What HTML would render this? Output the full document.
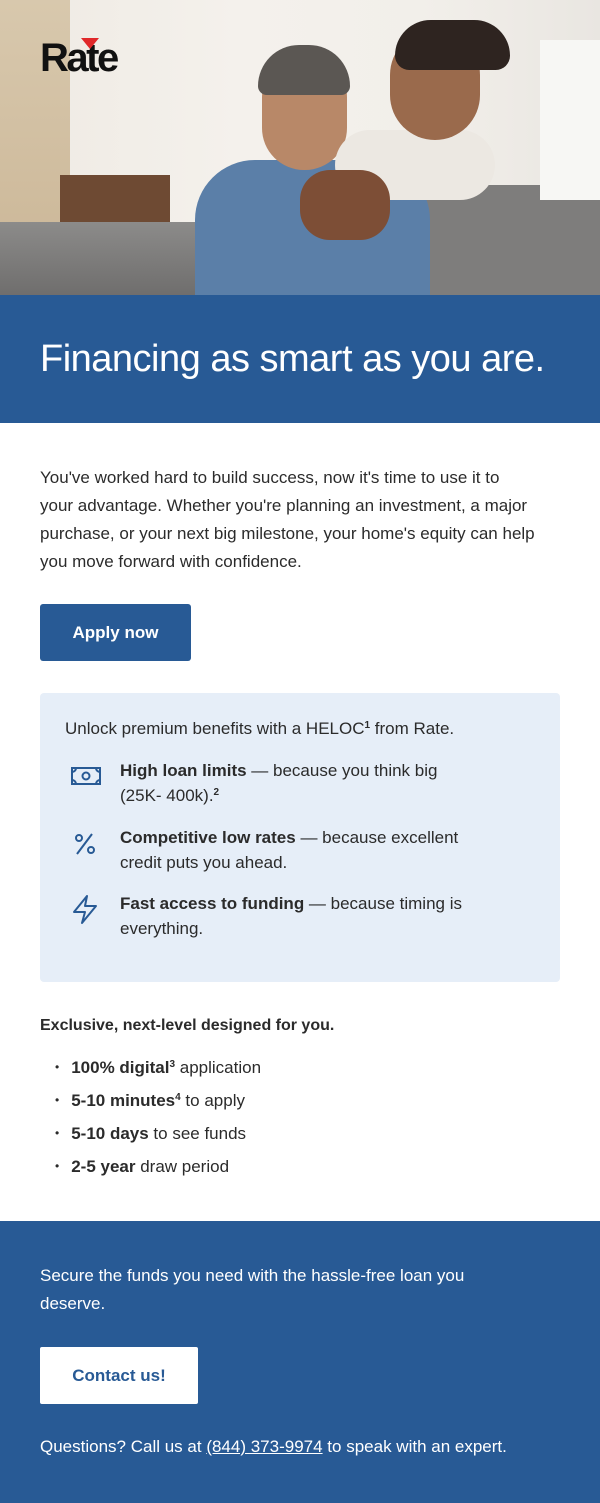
<!DOCTYPE html>
<html><head><meta charset="utf-8"><style>
*{margin:0;padding:0;box-sizing:border-box}
body{width:600px;height:1503px;font-family:"Liberation Sans",sans-serif;color:#2b2b2b;background:#fff;position:relative;overflow:hidden}
.hero{position:absolute;left:0;top:0;width:600px;height:295px;background:linear-gradient(90deg,#efeae3 0%,#f4f1ec 40%,#f2efea 70%,#e9e6e1 100%);overflow:hidden}
.abs{position:absolute}
.band{position:absolute;left:0;top:295px;width:600px;height:128px;background:#285a95;color:#fff;font-size:38px;padding-left:40px;line-height:128px;letter-spacing:-0.5px}
p.intro{position:absolute;left:40px;top:464px;width:496px;font-size:17px;line-height:28px}
.btn{position:absolute;left:40px;top:604px;width:151px;height:57px;background:#285a95;color:#fff;font-weight:bold;font-size:17px;text-align:center;line-height:57px;border-radius:3px}
.box{position:absolute;left:40px;top:693px;width:520px;height:289px;background:#e6eef8;border-radius:4px}
.box .h{position:absolute;left:25px;top:26px;font-size:17px}
.item{position:absolute;left:80px;font-size:17px;line-height:25px;width:350px}
.icon{position:absolute;left:30px}
.excl{position:absolute;left:40px;top:1017px;font-size:16px;font-weight:bold}
ul{position:absolute;left:55px;top:1055px;list-style:none;font-size:17px}
ul li{height:33px;line-height:26px}
ul li:before{content:"•";font-size:12px;margin-right:12px;position:relative;top:-2px}
sup{font-size:10px;line-height:0;vertical-align:6px;font-weight:bold}
.foot{position:absolute;left:0;top:1221px;width:600px;height:282px;background:#285a95;color:#fff}
.foot .t{position:absolute;left:40px;top:41px;width:470px;font-size:17px;line-height:28px}
.cbtn{position:absolute;left:40px;top:126px;width:158px;height:57px;background:#fff;color:#285a95;font-weight:bold;font-size:17px;text-align:center;line-height:57px;border-radius:2px}
.foot .q{position:absolute;left:40px;top:216px;font-size:17px}
</style></head><body>
<div class="hero">
 <div class="abs" style="left:0;top:0;width:70px;height:240px;background:linear-gradient(#d8c8ad,#cdb99a)"></div>
 <div class="abs" style="left:60px;top:175px;width:110px;height:55px;background:#6e4a33"></div>
 <div class="abs" style="left:0;top:222px;width:600px;height:73px;background:linear-gradient(#8c8b8a,#6f6e6d)"></div>
 <div class="abs" style="left:420px;top:185px;width:180px;height:110px;background:#7e7d7c"></div>
 <div class="abs" style="left:540px;top:40px;width:60px;height:160px;background:#f7f7f4"></div>
 <div class="abs" style="left:195px;top:160px;width:235px;height:135px;background:#5b7fa8;border-radius:60px 60px 0 0"></div>
 <div class="abs" style="left:262px;top:55px;width:85px;height:115px;background:#b88868;border-radius:42px"></div>
 <div class="abs" style="left:258px;top:45px;width:92px;height:50px;background:#5b5753;border-radius:46px 46px 10px 10px"></div>
 <div class="abs" style="left:335px;top:130px;width:160px;height:70px;background:#ece8e2;border-radius:35px"></div>
 <div class="abs" style="left:390px;top:30px;width:90px;height:110px;background:#9a6a4c;border-radius:45px"></div>
 <div class="abs" style="left:395px;top:20px;width:115px;height:50px;background:#2e2420;border-radius:50px 50px 20px 20px"></div>
 <div class="abs" style="left:300px;top:170px;width:90px;height:70px;background:#7d4e36;border-radius:30px"></div>
 <div class="abs" style="left:40px;top:38px;font-family:'Liberation Sans',sans-serif;font-weight:bold;font-size:40px;color:#111;letter-spacing:-2.5px;line-height:40px">Rate</div>
 <div class="abs" style="left:81px;top:38px;width:0;height:0;border-left:9px solid transparent;border-right:9px solid transparent;border-top:11px solid #e0282a"></div>
</div>
<div class="band">Financing as smart as you are.</div>
<p class="intro">You've worked hard to build success, now it's time to use it to your advantage. Whether you're planning an investment, a major purchase, or your next big milestone, your home's equity can help you move forward with confidence.</p>
<div class="btn">Apply now</div>
<div class="box">
 <div class="h">Unlock premium benefits with a HELOC<sup>1</sup> from Rate.</div>
 <svg class="icon" style="top:72px" width="32" height="22" viewBox="0 0 32 22" fill="none" stroke="#285a95" stroke-width="2"><rect x="2" y="3" width="28" height="16"/><circle cx="16" cy="11" r="3.5"/><path d="M2 7a4 4 0 0 0 4-4M26 3a4 4 0 0 0 4 4M2 15a4 4 0 0 1 4 4M30 15a4 4 0 0 0-4 4"/></svg>
 <div class="item" style="top:65px"><b>High loan limits</b> — because you think big (25K- 400k).<sup>2</sup></div>
 <svg class="icon" style="top:136px" width="30" height="30" viewBox="0 0 30 30" fill="none" stroke="#285a95" stroke-width="2"><path d="M22 5 7 25"/><circle cx="9" cy="9" r="3"/><circle cx="21" cy="21" r="3"/></svg>
 <div class="item" style="top:132px"><b>Competitive low rates</b> — because excellent credit puts you ahead.</div>
 <svg class="icon" style="top:200px" width="30" height="32" viewBox="0 0 30 32" fill="none" stroke="#285a95" stroke-width="2" stroke-linejoin="round"><path d="M17 3 4 19h11l-3 11 14-17H15z"/></svg>
 <div class="item" style="top:198px"><b>Fast access to funding</b> — because timing is everything.</div>
</div>
<div class="excl">Exclusive, next-level designed for you.</div>
<ul>
 <li><b>100% digital<sup>3</sup></b> application</li>
 <li><b>5-10 minutes<sup>4</sup></b> to apply</li>
 <li><b>5-10 days</b> to see funds</li>
 <li><b>2-5 year</b> draw period</li>
</ul>
<div class="foot">
 <div class="t">Secure the funds you need with the hassle-free loan you deserve.</div>
 <div class="cbtn">Contact us!</div>
 <div class="q">Questions? Call us at <u>(844) 373-9974</u> to speak with an expert.</div>
</div>
</body></html>
